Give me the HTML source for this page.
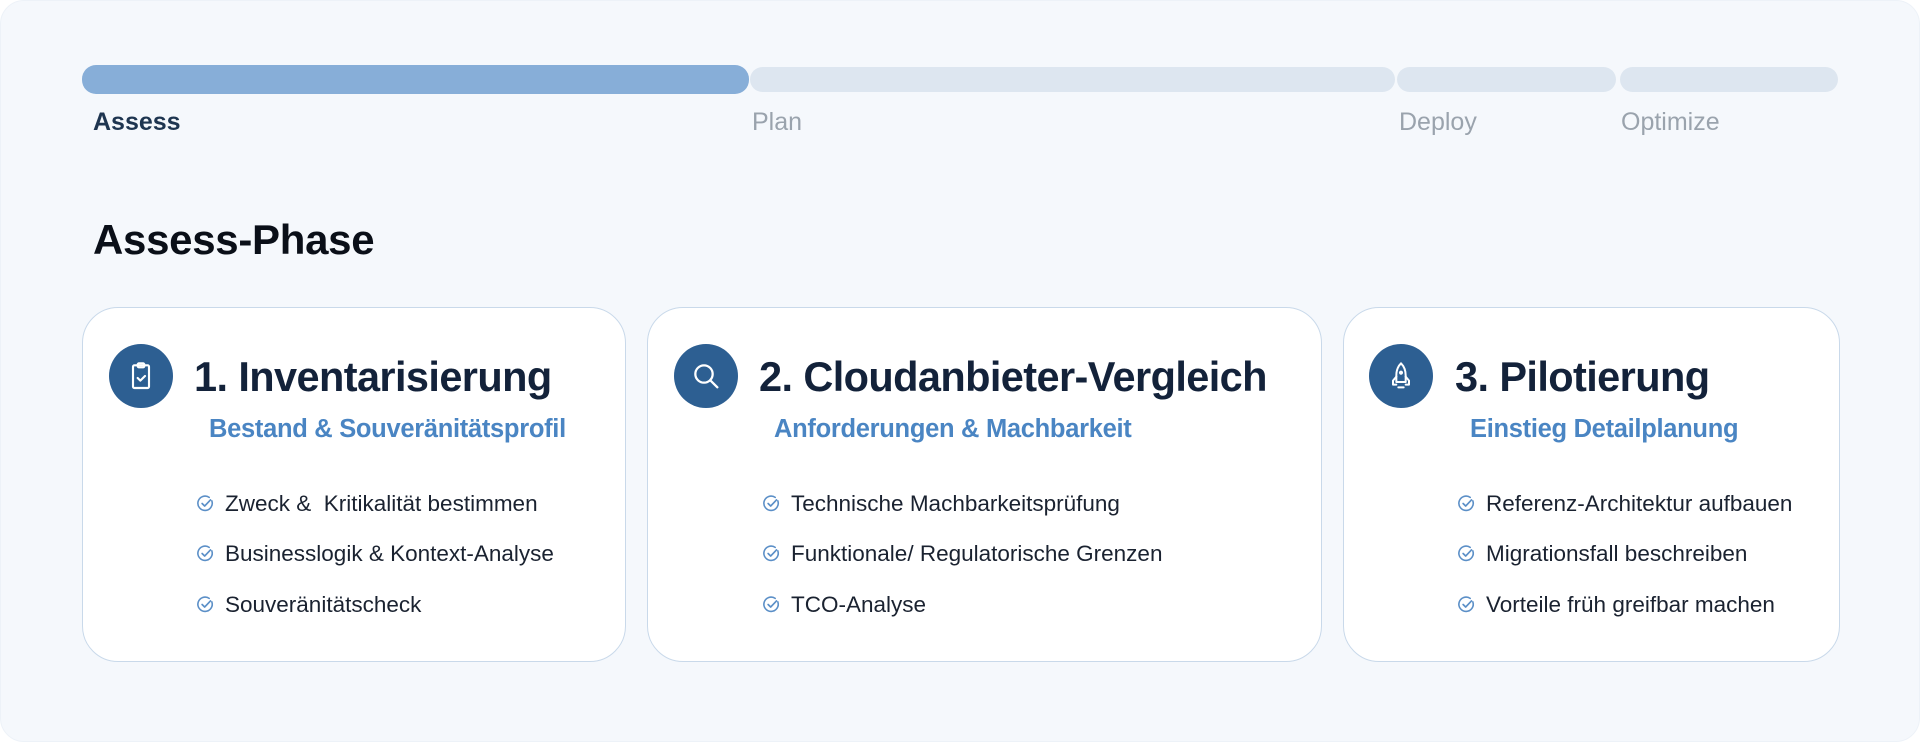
<!DOCTYPE html>
<html><head><meta charset="utf-8"><style>
*{margin:0;padding:0;box-sizing:border-box}
body{width:1920px;height:742px;background:#fff;font-family:"Liberation Sans",sans-serif;overflow:hidden;position:relative}
.wrap{position:absolute;left:0;top:0;width:1920px;height:742px;background:#f5f8fc;border-radius:24px;border:1px solid #edf2f8}
.seg{position:absolute;border-radius:14px;background:#dde6f0}
.lbl{position:absolute;top:107px;font-size:25px;color:#9aa3ad}
h1{position:absolute;left:92px;top:215px;font-size:42px;font-weight:bold;color:#0a0f18;letter-spacing:-0.3px}
.card{position:absolute;top:306px;height:355px;background:#fff;border:1.5px solid #c9d9ea;border-radius:36px}
.ic{position:absolute;top:343px;width:64px;height:64px;border-radius:50%;background:#2d5f92}
.ic svg{position:absolute;left:16px;top:16px}
.t{position:absolute;top:352px;font-size:41.5px;font-weight:bold;color:#13223a;letter-spacing:-0.6px;white-space:nowrap}
.s{position:absolute;top:414px;font-size:25.5px;font-weight:bold;color:#4a85c3;letter-spacing:-0.3px;white-space:nowrap}
.li{position:absolute;font-size:22.5px;color:#1a2230;white-space:nowrap}
.li svg{position:absolute;left:-29px;top:3px}
</style></head><body><div class="wrap">
<div class="seg" style="left:749px;top:66px;width:645px;height:25px"></div>
<div class="seg" style="left:1396px;top:66px;width:219px;height:25px"></div>
<div class="seg" style="left:1619px;top:66px;width:218px;height:25px"></div>
<div class="seg" style="left:81px;top:64px;width:667px;height:29px;background:#87aed8"></div>
<div class="lbl" style="left:92px;color:#1e3550;font-weight:bold">Assess</div>
<div class="lbl" style="left:751px">Plan</div>
<div class="lbl" style="left:1398px">Deploy</div>
<div class="lbl" style="left:1620px">Optimize</div>
<h1>Assess-Phase</h1>

<div class="card" style="left:81px;width:544px"></div>
<div class="card" style="left:646px;width:675px"></div>
<div class="card" style="left:1342px;width:497px"></div>

<div class="ic" style="left:108px"><svg width="32" height="32" viewBox="0 0 24 24" fill="none" stroke="#fff" stroke-width="1.6" stroke-linecap="round" stroke-linejoin="round"><rect x="6" y="4" width="12" height="17" rx="1"/><rect x="9.5" y="2.5" width="5" height="3" rx="1"/><path d="M9.5 13.5l2 2 3.5-3.5"/></svg></div>
<div class="ic" style="left:673px"><svg width="32" height="32" viewBox="0 0 24 24" fill="none" stroke="#fff" stroke-width="1.7" stroke-linecap="round"><circle cx="10.5" cy="10.5" r="6.5"/><path d="M15.5 15.5l5 5"/></svg></div>
<div class="ic" style="left:1368px"><svg width="32" height="32" viewBox="0 0 24 24" fill="none" stroke="#fff" stroke-width="1.5" stroke-linecap="round" stroke-linejoin="round"><path d="M12 2.5c-2.5 2.5-3.5 5.5-3.5 9v5h7v-5c0-3.5-1-6.5-3.5-9z"/><circle cx="12" cy="9.5" r="0.8" fill="#fff"/><path d="M8.5 12.5l-2.5 3v3h2.5M15.5 12.5l2.5 3v3h-2.5M10 20.5h4"/></svg></div>

<div class="t" style="left:193px">1. Inventarisierung</div>
<div class="t" style="left:758px">2. Cloudanbieter-Vergleich</div>
<div class="t" style="left:1454px">3. Pilotierung</div>
<div class="s" style="left:208px">Bestand &amp; Souveränitätsprofil</div>
<div class="s" style="left:773px">Anforderungen &amp; Machbarkeit</div>
<div class="s" style="left:1469px">Einstieg Detailplanung</div>

<svg width="0" height="0" style="position:absolute"><defs><symbol id="ck" viewBox="0 0 18 18"><path d="M15 6.5A6.8 6.8 0 1 1 12.5 3.2" fill="none" stroke="#5b8fc7" stroke-width="1.5" stroke-linecap="round"/><path d="M5.8 9l2.4 2.4 5.5-5.8" fill="none" stroke="#5b8fc7" stroke-width="1.6" stroke-linecap="round" stroke-linejoin="round"/></symbol></defs></svg>

<div class="li" style="left:224px;top:490px"><svg width="19" height="19"><use href="#ck"/></svg>Zweck &amp;&nbsp; Kritikalität bestimmen</div>
<div class="li" style="left:224px;top:540px"><svg width="19" height="19"><use href="#ck"/></svg>Businesslogik &amp; Kontext-Analyse</div>
<div class="li" style="left:224px;top:591px"><svg width="19" height="19"><use href="#ck"/></svg>Souveränitätscheck</div>
<div class="li" style="left:790px;top:490px"><svg width="19" height="19"><use href="#ck"/></svg>Technische Machbarkeitsprüfung</div>
<div class="li" style="left:790px;top:540px"><svg width="19" height="19"><use href="#ck"/></svg>Funktionale/ Regulatorische Grenzen</div>
<div class="li" style="left:790px;top:591px"><svg width="19" height="19"><use href="#ck"/></svg>TCO-Analyse</div>
<div class="li" style="left:1485px;top:490px"><svg width="19" height="19"><use href="#ck"/></svg>Referenz-Architektur aufbauen</div>
<div class="li" style="left:1485px;top:540px"><svg width="19" height="19"><use href="#ck"/></svg>Migrationsfall beschreiben</div>
<div class="li" style="left:1485px;top:591px"><svg width="19" height="19"><use href="#ck"/></svg>Vorteile früh greifbar machen</div>
</div></body></html>
